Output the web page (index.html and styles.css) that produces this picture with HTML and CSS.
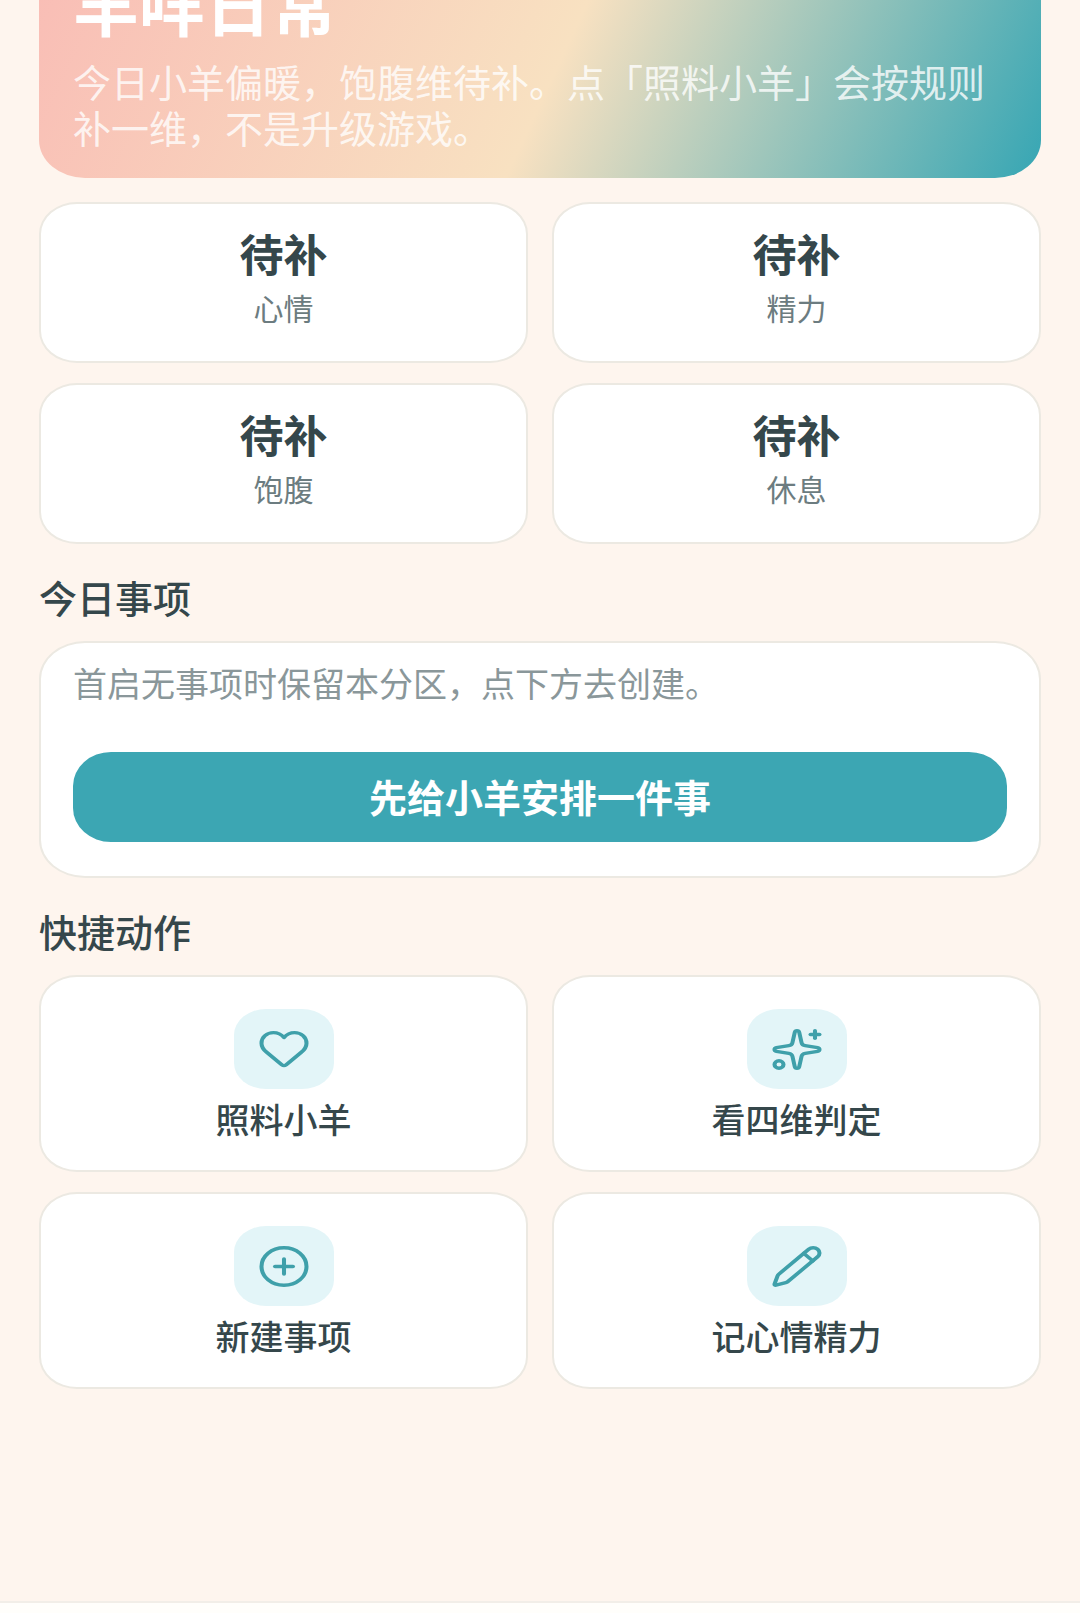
FILE: index.html
```
<!DOCTYPE html>
<html lang="zh-CN">
<head>
    <meta charset="UTF-8">
    <meta name="viewport" content="width=device-width, initial-scale=1.0">
    <link rel="stylesheet" href="styles.css">
    <title>羊咩日常</title>
</head>
<body>
    <main class="page">
        <header class="hero">
            <h1>羊咩日常</h1>
            <p>今日小羊偏暖，饱腹维待补。点「照料小羊」会按规则补一维，不是升级游戏。</p>
        </header>

        <section class="grid">
            <div class="card stat">
                <strong>待补</strong>
                <span>心情</span>
            </div>
            <div class="card stat">
                <strong>待补</strong>
                <span>精力</span>
            </div>
            <div class="card stat">
                <strong>待补</strong>
                <span>饱腹</span>
            </div>
            <div class="card stat">
                <strong>待补</strong>
                <span>休息</span>
            </div>
        </section>

        <h2>今日事项</h2>
        <section class="card todo">
            <p>首启无事项时保留本分区，点下方去创建。</p>
            <button class="primary-button" type="button">先给小羊安排一件事</button>
        </section>

        <h2>快捷动作</h2>
        <section class="grid">
            <button class="card action" type="button">
                <span class="icon-box">
                    <svg class="icon" viewBox="0 0 24 24" preserveAspectRatio="none" aria-hidden="true">
                        <path d="M2 8.6C2 5.4 4.4 3 7.3 3c1.9 0 3.5.9 4.7 2.6C13.2 3.9 14.8 3 16.7 3 19.6 3 22 5.4 22 8.6c0 2-.9 3.5-2.3 4.9L13 20.1q-1 .9-2 0L4.3 13.5C2.9 12.1 2 10.6 2 8.6z"/>
                    </svg>
                </span>
                <span>照料小羊</span>
            </button>
            <button class="card action" type="button">
                <span class="icon-box">
                    <svg class="icon" viewBox="0 0 24 24" preserveAspectRatio="none" aria-hidden="true">
                        <path d="M11.017 2.814a1 1 0 0 1 1.966 0l1.051 5.558a2 2 0 0 0 1.594 1.594l5.558 1.051a1 1 0 0 1 0 1.966l-5.558 1.051a2 2 0 0 0-1.594 1.594l-1.051 5.558a1 1 0 0 1-1.966 0l-1.051-5.558a2 2 0 0 0-1.594-1.594l-5.558-1.051a1 1 0 0 1 0-1.966l5.558-1.051a2 2 0 0 0 1.594-1.594z"/>
                        <path d="M20 2v4"/>
                        <path d="M22 4h-4"/>
                        <circle cx="4" cy="20" r="2"/>
                    </svg>
                </span>
                <span>看四维判定</span>
            </button>
            <button class="card action" type="button">
                <span class="icon-box">
                    <svg class="icon" viewBox="0 0 24 24" preserveAspectRatio="none" aria-hidden="true">
                        <circle cx="12" cy="12" r="10"/>
                        <path d="M8 12h8"/>
                        <path d="M12 8v8"/>
                    </svg>
                </span>
                <span>新建事项</span>
            </button>
            <button class="card action" type="button">
                <span class="icon-box">
                    <svg class="icon" viewBox="0 0 24 24" preserveAspectRatio="none" aria-hidden="true">
                        <path d="M21.174 6.812a1 1 0 0 0-3.986-3.987L3.842 16.174a2 2 0 0 0-.5.83l-1.321 4.352a.5.5 0 0 0 .623.622l4.353-1.32a2 2 0 0 0 .83-.497z"/>
                        <path d="m15 5 4 4"/>
                    </svg>
                </span>
                <span>记心情精力</span>
            </button>
        </section>
    </main>
    <footer class="tab-bar"></footer>
</body>
</html>
```

FILE: styles.css
```
* {
    box-sizing: border-box;
}

body {
    margin: 0;
    min-height: 100vh;
    display: flex;
    flex-direction: column;
    overflow: hidden;
    font-family: "Noto Sans CJK SC", "Noto Sans", sans-serif;
    color: #35474b;
    background-color: #fef5ee;
}

h1, h2, p {
    margin: 0;
}

button {
    font-family: inherit;
    color: inherit;
    cursor: pointer;
}

.page {
    flex: 1;
    padding: 0 39px;
}

/* scrolled up, the top of the banner is out of view */
.hero {
    margin-top: -66px;
    margin-bottom: 24px;
    padding: 28px 34px;
    border-radius: 46px / 38px;
    color: white;
    background: linear-gradient(115deg, #f9bcb5 0%, #f8e1c1 52%, #36a6b4 100%);
}

.hero h1 {
    margin-bottom: 16px;
    font-size: 66px;
    line-height: 80px;
}

.hero p {
    font-size: 38px;
    line-height: 46px;
    color: rgba(255, 255, 255, 0.8);
}

.grid {
    display: grid;
    grid-template-columns: repeat(2, 1fr);
    gap: 20px 24px;
}

.card {
    border: 2px solid #ece9e2;
    border-radius: 38px / 32px;
    background-color: white;
}

.stat {
    display: flex;
    flex-direction: column;
    align-items: center;
    gap: 8px;
    padding: 23px 0 34px;
}

.stat strong {
    font-size: 44px;
    line-height: 52px;
}

.stat span {
    font-size: 30px;
    line-height: 40px;
    color: #6c7c80;
}

h2 {
    margin: 29px 0 20px;
    font-size: 38px;
    font-weight: 500;
    line-height: 48px;
}

.todo {
    padding: 18px 32px 34px;
    border-radius: 46px / 38px;
}

.todo p {
    margin-bottom: 47px;
    font-size: 34px;
    line-height: 44px;
    color: #8a979a;
}

.primary-button {
    width: 100%;
    height: 90px;
    padding: 0 0 4px;
    border: none;
    border-radius: 38px / 34px;
    font-size: 38px;
    font-weight: bold;
    color: white;
    background-color: #3ca6b3;
}

.action {
    display: flex;
    flex-direction: column;
    align-items: center;
    gap: 8px;
    padding: 32px 0 29px;
    font-size: 34px;
    font-weight: 500;
    line-height: 44px;
}

.icon-box {
    display: flex;
    align-items: center;
    justify-content: center;
    width: 100px;
    height: 80px;
    border-radius: 32px / 26px;
    background-color: #e3f5f8;
}

.icon {
    width: 54px;
    height: 45px;
    fill: none;
    stroke: #3fa0aa;
    stroke-width: 1.8;
    stroke-linecap: round;
    stroke-linejoin: round;
    overflow: visible;
}

.tab-bar {
    height: 12px;
    border-top: 2px solid #f2eee8;
    background-color: #fffefb;
}
```
